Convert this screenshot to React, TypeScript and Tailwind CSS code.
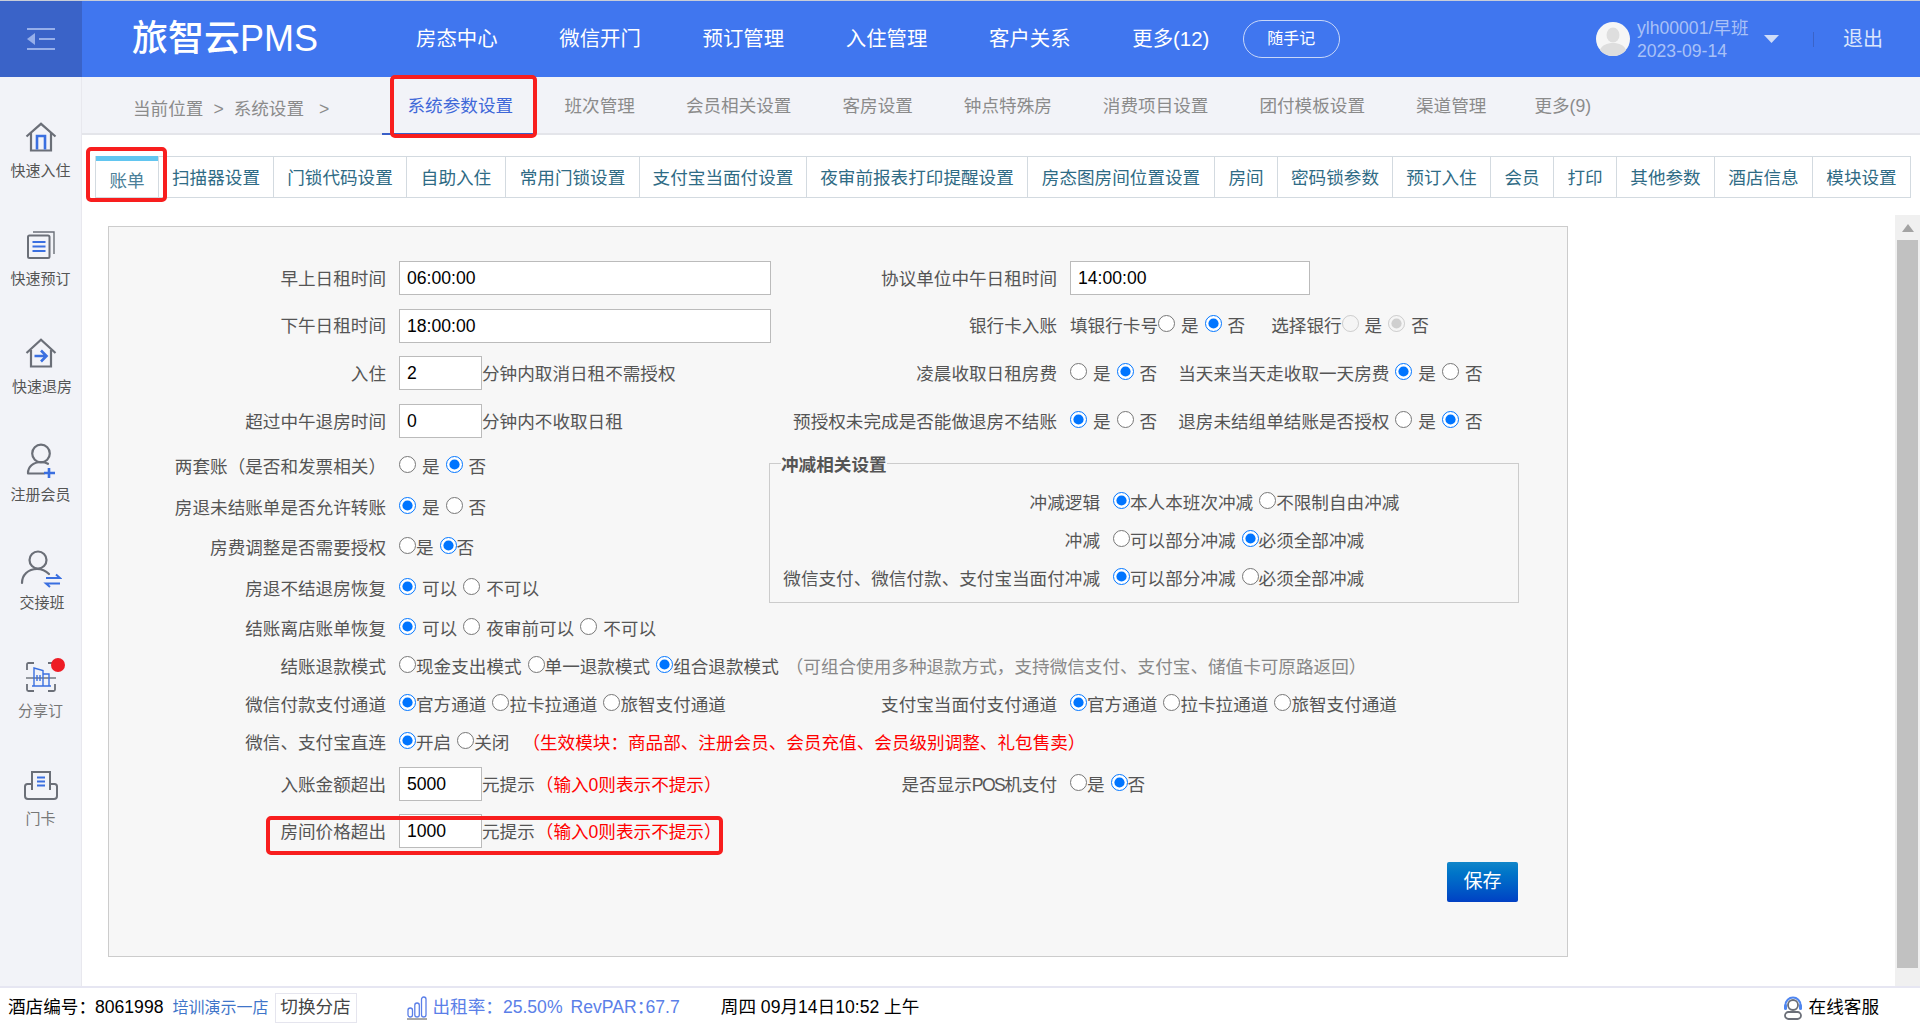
import React from "react";

const GRAY = "#6b6f78";
const BLUE = "#3a6fe0";

const Radio = ({ on, dis }: { on?: boolean; dis?: boolean }) => (
  <input type="radio" readOnly checked={!!on} disabled={dis} className="w-[17px] h-[17px] m-0 mb-[4px] shrink-0" />
);

// radio, a small space, the text, a small space
const Opt = ({ on, dis, t }: { on?: boolean; dis?: boolean; t: string }) => (
  <>
    <Radio on={on} dis={dis} />
    <span className="ml-[6px] mr-[6px] pt-[2px] whitespace-nowrap">{t}</span>
  </>
);

// radio directly followed by its text
const Tight = ({ on, t }: { on?: boolean; t: string }) => (
  <>
    <Radio on={on} />
    <span className="mr-[6px] pt-[2px] whitespace-nowrap">{t}</span>
  </>
);

const Field = ({ v, cls }: { v: string; cls: string }) => (
  <input
    readOnly
    value={v}
    className={`${cls} h-[34px] border border-[#bbbbbb] bg-white pl-[7px] pt-[1px] text-black outline-none shrink-0`}
  />
);

const Label = ({ t }: { t: React.ReactNode }) => (
  <div className="w-[277px] mr-[13px] pt-[2px] text-right whitespace-nowrap shrink-0">{t}</div>
);
const RLabel = ({ t }: { t: React.ReactNode }) => (
  <div className="w-[287px] mr-[13px] pt-[2px] text-right whitespace-nowrap shrink-0">{t}</div>
);

const Plain = ({ children, cls }: { children: React.ReactNode; cls?: string }) => (
  <span className={`pt-[2px] whitespace-nowrap ${cls ?? ""}`}>{children}</span>
);

const Red = ({ children, cls }: { children: React.ReactNode; cls?: string }) => (
  <span className={`pt-[2px] text-[#ff0000] whitespace-nowrap ${cls ?? ""}`}>{children}</span>
);

const HouseIcon = () => (
  <svg width="32" height="30" viewBox="0 0 32 30" fill="none">
    <path d="M1.5 14.5 16 1.8l14.5 12.7" stroke={GRAY} strokeWidth="2.2" />
    <path d="M6 11v17.5h20V11" stroke={GRAY} strokeWidth="2.2" />
    <path d="M12 27.5V14h8v13.5" stroke={BLUE} strokeWidth="2.6" />
  </svg>
);
const DocIcon = () => (
  <svg width="28" height="28" viewBox="0 0 28 28" fill="none">
    <rect x="1" y="4.5" width="21.5" height="22.5" rx="1.5" stroke={GRAY} strokeWidth="2" />
    <path d="M6 1h21v22" stroke={GRAY} strokeWidth="1.4" />
    <path d="M5.5 11h13M5.5 15.5h13M5.5 20h13" stroke={BLUE} strokeWidth="2.2" />
  </svg>
);
const CheckoutIcon = () => (
  <svg width="32" height="30" viewBox="0 0 32 30" fill="none">
    <path d="M1.5 15 16 1.8 30.5 15" stroke={GRAY} strokeWidth="2.2" />
    <path d="M6 12v16.5h20V12" stroke={GRAY} strokeWidth="2.2" />
    <path d="M9.500 18h11M16 12.500l5.500 5.500-5.500 5.500" stroke={BLUE} strokeWidth="2.6" />
  </svg>
);
const UserPlusIcon = () => (
  <svg width="30" height="36" viewBox="0 0 30 36" fill="none">
    <circle cx="15" cy="10.5" r="8.8" stroke={GRAY} strokeWidth="2.2" />
    <path d="M2 30c0-6 5-11 13-11 3 0 5 .6 7 1.8M2 30.5h16" stroke={GRAY} strokeWidth="2.2" strokeLinecap="round" />
    <path d="M23 25v10M18 30h11" stroke={BLUE} strokeWidth="2.6" />
  </svg>
);
const ExchangeIcon = () => (
  <svg width="42" height="38" viewBox="0 0 42 38" fill="none">
    <circle cx="18" cy="10" r="8.5" stroke={GRAY} strokeWidth="2.2" />
    <path d="M2 33c0-8 6-14 15-14 5 0 9 2 12 5" stroke={GRAY} strokeWidth="2.2" strokeLinecap="round" />
    <path d="M26 28h14l-4-3.500M40 33.500H26l4 3.500" stroke={BLUE} strokeWidth="2" />
  </svg>
);
const ShareIcon = () => (
  <svg width="30" height="30" viewBox="0 0 30 30" fill="none">
    <path d="M1 8V2.500C1 1.500 1.500 1 2.500 1H8M22 1h5.500C28.500 1 29 1.500 29 2.500V8M1 22v5.500C1 28.500 1.500 29 2.500 29H8M22 29h5.500c1 0 1.500-.5 1.500-1.500V22" stroke={GRAY} strokeWidth="1.8" />
    <path d="M0 16h30" stroke={GRAY} strokeWidth="1.4" />
    <path d="M8 24V6l9 2.500V24M17 12h6v12M11 13v6M14 13v6M6 24h19" stroke={BLUE} strokeWidth="1.4" />
  </svg>
);
const CardIcon = () => (
  <svg width="34" height="30" viewBox="0 0 34 30" fill="none">
    <path d="M8 20V2h18v18" stroke={GRAY} strokeWidth="2" />
    <path d="M13 7.500h8M13 11.500h8M13 15.500h8" stroke={BLUE} strokeWidth="1.8" />
    <path d="M8 14H3.500C2 14 1 15 1 16.500V26c0 1.800 1.200 3 3 3h26c1.800 0 3-1.200 3-3v-9.500c0-1.500-1-2.500-2.500-2.500H26" stroke={GRAY} strokeWidth="2" />
  </svg>
);

const side = [
  { t: "快速入住", icon: <HouseIcon />, c: "text-[#555555]", x: "" },
  { t: "快速预订", icon: <DocIcon />, c: "text-[#555555]", x: "" },
  { t: "快速退房", icon: <CheckoutIcon />, c: "text-[#555555]", x: "ml-[3px]" },
  { t: "注册会员", icon: <UserPlusIcon />, c: "text-[#555555]", x: "" },
  { t: "交接班", icon: <ExchangeIcon />, c: "text-[#555555]", x: "ml-[3px]" },
  { t: "分享订", icon: <ShareIcon />, c: "text-[#777777]", x: "" },
  { t: "门卡", icon: <CardIcon />, c: "text-[#777777]", x: "" },
];

const nav = ["房态中心", "微信开门", "预订管理", "入住管理", "客户关系", "更多(12)"];
const sub = ["班次管理", "会员相关设置", "客房设置", "钟点特殊房", "消费项目设置", "团付模板设置", "渠道管理"];
const tabs = [
  { t: "扫描器设置", w: "w-[115px]" },
  { t: "门锁代码设置", w: "w-[133px]" },
  { t: "自助入住", w: "w-[99px]" },
  { t: "常用门锁设置", w: "w-[134px]" },
  { t: "支付宝当面付设置", w: "w-[167px]" },
  { t: "夜审前报表打印提醒设置", w: "w-[221px]" },
  { t: "房态图房间位置设置", w: "w-[187px]" },
  { t: "房间", w: "w-[63px]" },
  { t: "密码锁参数", w: "w-[115px]" },
  { t: "预订入住", w: "w-[98px]" },
  { t: "会员", w: "w-[63px]" },
  { t: "打印", w: "w-[63px]" },
  { t: "其他参数", w: "w-[98px]" },
  { t: "酒店信息", w: "w-[98px]" },
  { t: "模块设置", w: "w-[98px]" },
];

export default function App() {
  return (
    <div className="relative w-[1920px] h-[1025px] overflow-hidden bg-white flex flex-col text-[17.6px] text-[#555555] [font-family:'Liberation_Sans','Noto_Sans_CJK_SC',sans-serif]">
      {/* header */}
      <header className="h-[77px] shrink-0 flex items-center bg-[#4076ef] border-t border-[#c8cdd8] text-white">
        <div className="w-[82px] h-full shrink-0 bg-[#3a63c8] flex items-center justify-center">
          <svg width="28" height="24" viewBox="0 0 28 24" fill="none">
            <path d="M0 2h28M12 12h16M0 22h28" stroke="#96afea" strokeWidth="2" />
            <path d="M0 12l8-6v12z" fill="#96afea" />
          </svg>
        </div>
        <div className="w-[334px] pl-[50px] shrink-0 text-[36px] font-medium whitespace-nowrap leading-none">旅智云PMS</div>
        <nav className="flex gap-[61.7px] text-[20.4px]">
          {nav.map((n) => (
            <span key={n} className="whitespace-nowrap">{n}</span>
          ))}
        </nav>
        <div className="ml-[33.5px] w-[97px] h-[38px] rounded-full border border-[#c9d7f8] flex items-center justify-center text-[16px]">随手记</div>
        <div className="ml-auto flex items-center pr-[37px]">
          <svg width="34" height="34" viewBox="0 0 34 34" className="shrink-0">
            <circle cx="17" cy="17" r="17" fill="#f6f6f6" />
            <ellipse cx="17" cy="13" rx="6.5" ry="7.5" fill="#dedede" />
            <path d="M4 28c2-5 7-7 13-7s11 2 13 7c-3 4-8 6-13 6S7 32 4 28z" fill="#dedede" />
          </svg>
          <div className="ml-[7px] w-[127px] text-[#a9c1f7] leading-[23px] whitespace-nowrap mt-[2px]">
            <div>ylh00001/早班</div>
            <div>2023-09-14</div>
          </div>
          <svg width="15" height="8" viewBox="0 0 15 8"><path d="M0 0h15L7.5 8z" fill="#cfdcf8" /></svg>
          <div className="ml-[34px] w-[1px] h-[15px] bg-[#3a63c8]" />
          <div className="ml-[29px] text-[20px] text-[#dce6fc]">退出</div>
        </div>
      </header>

      <div className="flex-1 flex min-h-0">
        {/* side bar */}
        <aside className="w-[82px] shrink-0 bg-[#f2f3f8] border-r border-[#e8e8ee] pt-[42px] flex flex-col">
          {side.map((s) => (
            <div key={s.t} className="relative h-[108px] shrink-0 flex flex-col items-center">
              <div className="h-[36px] flex items-center justify-center">{s.icon}</div>
              <div className={`mt-[6px] h-[20px] leading-[20px] text-[15px] whitespace-nowrap ${s.c} ${s.x}`}>{s.t}</div>
              {s.t === "分享订" && <span className="absolute left-[51px] top-[-1px] w-[14px] h-[14px] rounded-full bg-[#ee1c25]" />}
            </div>
          ))}
        </aside>

        <main className="flex-1 min-w-0 flex flex-col">
          {/* second level nav */}
          <div className="h-[58px] shrink-0 bg-[#f2f3f8] border-b-2 border-[#e4e5ea] flex items-stretch text-[#8b8b8b]">
            <div className="w-[300px] pl-[51px] pt-[8px] shrink-0 flex items-center whitespace-nowrap">
              <span>当前位置</span>
              <span className="ml-[10px]">&gt;</span>
              <span className="ml-[10px]">系统设置</span>
              <span className="ml-[15px]">&gt;</span>
            </div>
            <div className="w-[154px] -mb-[2px] pl-[25.5px] pt-[3px] flex items-center border-b-2 border-[#3a5fc8] text-[#3f68d8] whitespace-nowrap">系统参数设置</div>
            <div className="w-[3px] shrink-0" />
            {sub.map((t) => (
              <div key={t} className="px-[25.5px] flex items-center pt-[3px] whitespace-nowrap">{t}</div>
            ))}
            <div className="-ml-[3px] px-[25.5px] flex items-center pt-[3px] whitespace-nowrap">更多(9)</div>
          </div>

          {/* tab strip */}
          <div className="mt-[21px] ml-[13px] h-[42px] shrink-0 flex border-y border-[#d3dae0] w-[1816px] text-[#2f6b85]">
            <div className="w-[64px] shrink-0 border-x border-[#d3dae0] flex flex-col items-center -mt-px">
              <div className="w-full h-[5px] bg-[#62c6f0] shrink-0" />
              <div className="mt-[7px] text-[#4a7f99]">账单</div>
            </div>
            {tabs.map((t) => (
              <div key={t.t} className={`${t.w} shrink-0 border-r border-[#d3dae0] flex items-center justify-center pt-[2px] whitespace-nowrap`}>{t.t}</div>
            ))}
          </div>

          {/* body */}
          <div className="mt-[17px] flex-1 min-h-0 flex">
            <section className="ml-[26px] mt-[11px] w-[1460px] h-[731px] shrink-0 bg-[#f7f7f7] border border-[#cccccc] pt-[27px] pr-[49px]">
              {/* four upper rows */}
              <div className="h-[48px] flex items-center">
                <div className="w-[661px] flex items-center shrink-0">
                  <Label t="早上日租时间" />
                  <Field v="06:00:00" cls="w-[372px]" />
                </div>
                <RLabel t="协议单位中午日租时间" />
                <Field v="14:00:00" cls="w-[240px]" />
              </div>
              <div className="h-[47px] flex items-center">
                <div className="w-[661px] flex items-center shrink-0">
                  <Label t="下午日租时间" />
                  <Field v="18:00:00" cls="w-[372px]" />
                </div>
                <RLabel t="银行卡入账" />
                <Plain>填银行卡号</Plain>
                <Opt t="是" />
                <Opt on t="否" />
                <Plain cls="ml-[20px]">选择银行</Plain>
                <Opt dis t="是" />
                <Opt dis on t="否" />
              </div>
              <div className="h-[48px] flex items-center">
                <div className="w-[661px] flex items-center shrink-0">
                  <Label t="入住" />
                  <Field v="2" cls="w-[83px]" />
                  <Plain>分钟内取消日租不需授权</Plain>
                </div>
                <RLabel t="凌晨收取日租房费" />
                <Opt t="是" />
                <Opt on t="否" />
                <Plain cls="ml-[15px] mr-[6px]">当天来当天走收取一天房费</Plain>
                <Opt on t="是" />
                <Opt t="否" />
              </div>
              <div className="h-[48px] flex items-center">
                <div className="w-[661px] flex items-center shrink-0">
                  <Label t="超过中午退房时间" />
                  <Field v="0" cls="w-[83px]" />
                  <Plain>分钟内不收取日租</Plain>
                </div>
                <RLabel t="预授权未完成是否能做退房不结账" />
                <Opt on t="是" />
                <Opt t="否" />
                <Plain cls="ml-[15px] mr-[6px]">退房未结组单结账是否授权</Plain>
                <Opt t="是" />
                <Opt on t="否" />
              </div>

              {/* rows next to the fieldset */}
              <div className="flex items-start">
                <div className="w-[660px] shrink-0">
                  <div className="h-[42px] flex items-center"><Label t="两套账（是否和发票相关）" /><Opt t="是" /><Opt on t="否" /></div>
                  <div className="h-[40px] flex items-center"><Label t="房退未结账单是否允许转账" /><Opt on t="是" /><Opt t="否" /></div>
                  <div className="h-[41px] flex items-center"><Label t="房费调整是否需要授权" /><Tight t="是" /><Tight on t="否" /></div>
                  <div className="h-[41px] flex items-center"><Label t="房退不结退房恢复" /><Opt on t="可以" /><Opt t="不可以" /></div>
                </div>
                <fieldset className="mt-[6px] w-[750px] h-[152px] border border-[#cccccc] shrink-0">
                  <legend className="ml-[11px] font-bold leading-[20px] pt-[4px]">冲减相关设置</legend>
                  <div className="pt-[8px]">
                    <div className="h-[38px] flex items-center">
                      <div className="w-[330px] mr-[13px] pt-[2px] text-right whitespace-nowrap">冲减逻辑</div>
                      <Tight on t="本人本班次冲减" /><Tight t="不限制自由冲减" />
                    </div>
                    <div className="h-[38px] flex items-center">
                      <div className="w-[330px] mr-[13px] pt-[2px] text-right whitespace-nowrap">冲减</div>
                      <Tight t="可以部分冲减" /><Tight on t="必须全部冲减" />
                    </div>
                    <div className="h-[38px] flex items-center">
                      <div className="w-[330px] mr-[13px] pt-[2px] text-right whitespace-nowrap">微信支付、微信付款、支付宝当面付冲减</div>
                      <Tight on t="可以部分冲减" /><Tight t="必须全部冲减" />
                    </div>
                  </div>
                </fieldset>
              </div>

              {/* lower rows */}
              <div className="h-[38px] flex items-center"><Label t="结账离店账单恢复" /><Opt on t="可以" /><Opt t="夜审前可以" /><Opt t="不可以" /></div>
              <div className="h-[39px] flex items-center">
                <Label t="结账退款模式" />
                <Tight t="现金支出模式" /><Tight t="单一退款模式" /><Tight on t="组合退款模式" />
                <Plain cls="ml-[1px] text-[#888888]">（可组合使用多种退款方式，支持微信支付、支付宝、储值卡可原路返回）</Plain>
              </div>
              <div className="h-[37px] flex items-center">
                <div className="w-[661px] flex items-center shrink-0">
                  <Label t="微信付款支付通道" />
                  <Tight on t="官方通道" /><Tight t="拉卡拉通道" /><Tight t="旅智支付通道" />
                </div>
                <RLabel t="支付宝当面付支付通道" />
                <Tight on t="官方通道" /><Tight t="拉卡拉通道" /><Tight t="旅智支付通道" />
              </div>
              <div className="h-[39px] flex items-center">
                <Label t="微信、支付宝直连" />
                <Tight on t="开启" /><Tight t="关闭" />
                <Red cls="ml-[7px]">（生效模块：商品部、注册会员、会员充值、会员级别调整、礼包售卖）</Red>
              </div>
              <div className="h-[44px] flex items-center">
                <div className="w-[661px] flex items-center shrink-0">
                  <Label t="入账金额超出" />
                  <Field v="5000" cls="w-[83px]" />
                  <Plain>元提示</Plain>
                  <Red cls="ml-[1px]">（输入0则表示不提示）</Red>
                </div>
                <RLabel t={<>是否显示<span className="tracking-[-1.6px]">POS</span>机支付</>} />
                <Tight t="是" /><Tight on t="否" />
              </div>
              <div className="h-[50px] flex items-center">
                <Label t="房间价格超出" />
                <Field v="1000" cls="w-[83px]" />
                <Plain>元提示</Plain>
                <Red cls="ml-[1px]">（输入0则表示不提示）</Red>
              </div>
              <div className="mt-[6px] flex justify-end">
                <button className="w-[71px] h-[40px] rounded-[2px] bg-linear-to-b from-[#1186c9] to-[#0340c4] text-white text-[19px]">保存</button>
              </div>
            </section>

            {/* scroll bar */}
            <div className="ml-auto w-[25px] shrink-0 bg-[#f0f0f0] flex flex-col items-center">
              <div className="h-[25px] flex items-center justify-center">
                <svg width="12" height="8" viewBox="0 0 12 8"><path d="M6 0l6 8H0z" fill="#a3a3a3" /></svg>
              </div>
              <div className="w-[21px] h-[728px] bg-[#c1c1c1]" />
            </div>
          </div>
        </main>
      </div>

      {/* footer */}
      <footer className="h-[39px] shrink-0 border-t-2 border-[#e6e6f2] bg-white flex items-center pt-[2px] pl-[8px] pr-[41px] text-black whitespace-nowrap">
        <span>酒店编号：</span>
        <span className="-ml-[1px]">8061998</span>
        <span className="ml-[9px] text-[16px] text-[#3f75c9]">培训演示一店</span>
        <span className="ml-[6px] w-[82px] h-[30px] border border-[#e5e5ee] flex items-center justify-center text-[#444444]">切换分店</span>
        <svg width="20" height="24" viewBox="0 0 20 24" fill="none" className="ml-[50px] shrink-0">
          <rect x="1" y="12" width="4.5" height="9" rx="2.2" stroke="#5b7fe8" strokeWidth="1.3" />
          <rect x="7.8" y="7" width="4.5" height="14" rx="2.2" stroke="#5b7fe8" strokeWidth="1.3" />
          <rect x="14.5" y="1" width="4.5" height="20" rx="2.2" stroke="#5b7fe8" strokeWidth="1.3" />
          <path d="M0 23h20" stroke="#a8a8a8" strokeWidth="2" />
        </svg>
        <span className="ml-[6px] text-[#5b7fe8]">出租率：25.50%</span>
        <span className="ml-[8px] w-[75px] text-[#5b7fe8]">RevPAR：</span>
        <span className="text-[#5b7fe8]">67.7</span>
        <span className="ml-[41px]">周四 09月14日10:52 上午</span>
        <svg width="20" height="24" viewBox="0 0 20 24" fill="none" className="ml-auto shrink-0">
          <circle cx="10" cy="9" r="5" stroke={GRAY} strokeWidth="1.8" />
          <path d="M2.5 12V9a7.5 7.500 0 0 1 15 0v3" stroke="#4f86f0" strokeWidth="2" />
          <rect x="1" y="8" width="3" height="6" rx="1.5" fill="#4f86f0" />
          <rect x="16" y="8" width="3" height="6" rx="1.5" fill="#4f86f0" />
          <rect x="2" y="16" width="16" height="7" rx="3.5" stroke={GRAY} strokeWidth="1.8" />
        </svg>
        <span className="ml-[6px]">在线客服</span>
      </footer>

      {/* red annotations drawn over the screenshot */}
      <div className="absolute left-[390px] top-[75px] w-[147px] h-[63px] border-4 border-[#f81e1e] rounded-[5px] pointer-events-none" />
      <div className="absolute left-[86px] top-[147px] w-[81px] h-[55px] border-4 border-[#f81e1e] rounded-[5px] pointer-events-none" />
      <div className="absolute left-[266px] top-[816px] w-[457px] h-[39px] border-4 border-[#f81e1e] rounded-[5px] pointer-events-none" />
    </div>
  );
}
